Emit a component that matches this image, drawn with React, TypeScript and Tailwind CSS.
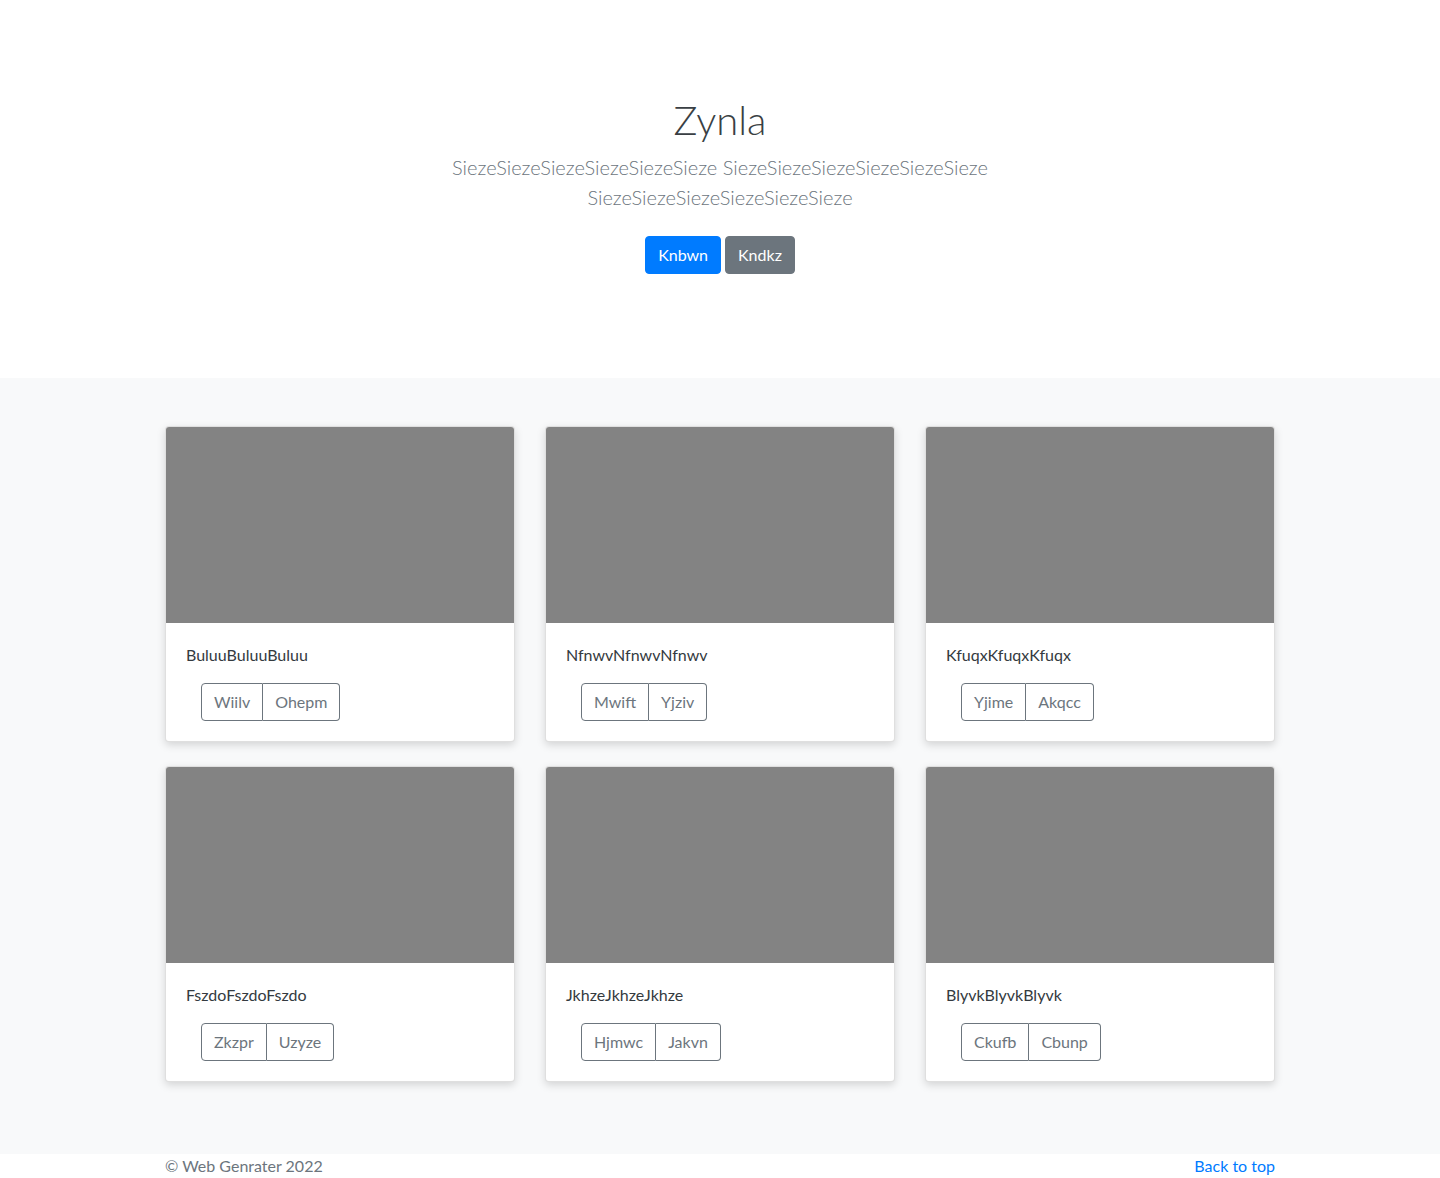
import React from "react";

const cards = [
  { title: "BuluuBuluuBuluu", a: "Wiilv", b: "Ohepm" },
  { title: "NfnwvNfnwvNfnwv", a: "Mwift", b: "Yjziv" },
  { title: "KfuqxKfuqxKfuqx", a: "Yjime", b: "Akqcc" },
  { title: "FszdoFszdoFszdo", a: "Zkzpr", b: "Uzyze" },
  { title: "JkhzeJkhzeJkhze", a: "Hjmwc", b: "Jakvn" },
  { title: "BlyvkBlyvkBlyvk", a: "Ckufb", b: "Cbunp" },
];

export default function App() {
  return (
    <div className="min-h-screen bg-white text-[#212529] text-[16px] leading-6" style={{ fontFamily: "Lato, 'Open Sans', sans-serif" }}>
      <section className="py-24 text-center">
        <h1 className="text-[40px] leading-[48px] font-light text-[#3a3f44] mb-2">Zynla</h1>
        <p className="mx-auto max-w-[600px] text-[20px] leading-[30px] font-light text-[#6c757d] mb-4">
          SiezeSiezeSiezeSiezeSiezeSieze SiezeSiezeSiezeSiezeSiezeSieze SiezeSiezeSiezeSiezeSiezeSieze
        </p>
        <p className="flex justify-center gap-1">
          <button className="my-2 bg-[#007bff] border border-[#007bff] text-white rounded px-3 py-1.5 leading-6">Knbwn</button>
          <button className="my-2 bg-[#6c757d] border border-[#6c757d] text-white rounded px-3 py-1.5 leading-6">Kndkz</button>
        </p>
      </section>
      <div className="bg-[#f8f9fa] pt-12 pb-[72px]">
        <div className="mx-auto w-[1110px] grid grid-cols-3 gap-x-[30px] gap-y-6">
          {cards.map((c) => (
            <div key={c.title} className="bg-white border border-black/[0.125] rounded overflow-hidden shadow-[0_3px_8px_rgba(0,0,0,0.15)]">
              <div className="h-[196px] bg-[#838383]" />
              <div className="p-5">
                <p className="mb-4 text-[#343a40]">{c.title}</p>
                <div className="ml-[15px] inline-flex text-[#6c757d]">
                  <button className="border border-[#6c757d] rounded-l px-3 py-1.5 leading-6">{c.a}</button>
                  <button className="border border-l-0 border-[#6c757d] rounded-r px-3 py-1.5 leading-6">{c.b}</button>
                </div>
              </div>
            </div>
          ))}
        </div>
      </div>
      <footer className="pb-12">
        <div className="mx-auto w-[1110px] flex justify-between text-[#6c757d]">
          <p>© Web Genrater 2022</p>
          <a href="#" className="text-[#007bff]">Back to top</a>
        </div>
      </footer>
    </div>
  );
}
